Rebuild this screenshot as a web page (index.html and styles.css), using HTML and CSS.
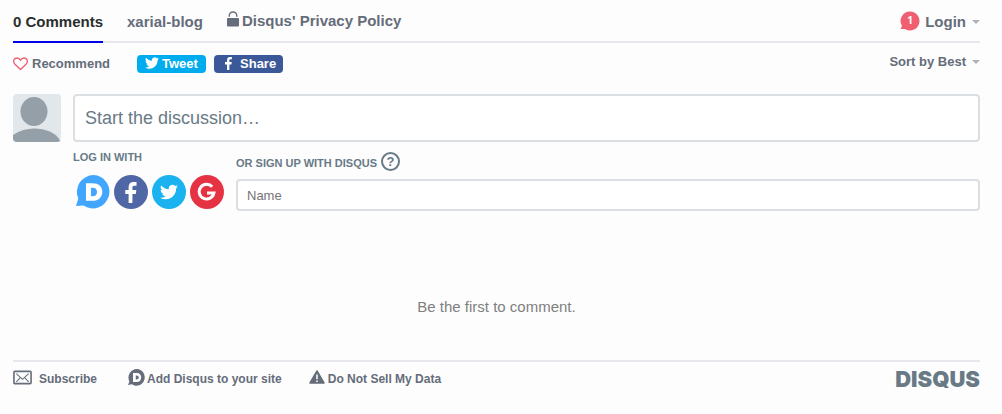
FILE: index.html
```html
<!DOCTYPE html>
<html lang="en">
<head>
<meta charset="utf-8">
<meta name="viewport" content="width=device-width, initial-scale=1">
<title>Comments</title>
<link rel="stylesheet" href="styles.css">
</head>
<body>
<svg class="sprite" aria-hidden="true">
  <symbol id="bird" viewBox="0 0 24 24"><path d="M23.9 4.6a10 10 0 0 1-2.8.8 4.900 4.900 0 0 0 2.200-2.700 9.900 9.900 0 0 1-3.100 1.200 4.920 4.920 0 0 0-8.400 4.500A14 14 0 0 1 1.700 3.200a4.920 4.920 0 0 0 1.500 6.500 4.900 4.900 0 0 1-2.200-.6v.1a4.920 4.920 0 0 0 3.900 4.800 5 5 0 0 1-2.200.1 4.930 4.930 0 0 0 4.600 3.400A9.900 9.900 0 0 1 0 19.500a14 14 0 0 0 7.500 2.200c9.100 0 14-7.500 14-14v-.6a10 10 0 0 0 2.400-2.500z"/></symbol>
  <symbol id="fb" viewBox="0 0 12 22"><path d="M3.500 22V12.500H0V8.500h3.500V5.500C3.500 2 5.500 0 8.700 0c1.500 0 2.800.1 3.100.2v3.700H9.500c-1.700 0-2 .8-2 2v2.600h4.100l-.6 4H7.500V22z"/></symbol>
</svg>
<main class="thread">
  <nav class="nav">
    <a class="nav-tab active" href="#comments">0 Comments</a>
    <a class="nav-tab" href="#community">xarial-blog</a>
    <a class="nav-tab privacy" href="#privacy">
      <svg class="lock" viewBox="0 0 12 16"><path d="M2.200 5.700V4.700a3.800 3.700 0 0 1 7.600 0v1" fill="none" stroke="currentColor" stroke-width="1.400"/><rect y="7" width="12" height="8.500" rx="1" fill="currentColor"/></svg>Disqus' Privacy Policy</a>
    <button class="nav-tab login" type="button">
      <svg class="notice" viewBox="0 0 20 20"><path d="M10 0.500a9.500 9.500 0 1 1-5 17.600L0.500 18l1.500-3A9.500 9.500 0 0 1 10 .5z" fill="#f05f70"/><text x="10" y="13" text-anchor="middle">1</text></svg>Login<span class="caret"></span>
    </button>
  </nav>
  <div class="tools">
    <button class="recommend" type="button">
      <svg class="heart" viewBox="0 0 15 14"><path d="M7.500 12.500L2 7.200C-.8 4.200 1.200 1 4 1c1.600 0 2.800.9 3.500 2.200C8.200 1.900 9.400 1 11 1c2.800 0 4.800 3.200 2 6.200z" fill="none" stroke="#f05f70" stroke-width="1.300"/></svg>Recommend</button>
    <div class="shares">
      <button class="share tweet" type="button"><svg class="share-bird"><use href="#bird"/></svg>Tweet</button>
      <button class="share facebook" type="button"><svg class="share-fb"><use href="#fb"/></svg>Share</button>
    </div>
    <button class="sort" type="button">Sort by Best<span class="caret"></span></button>
  </div>
  <form class="composer">
    <svg class="avatar" viewBox="0 0 48 48"><rect width="48" height="48" fill="#e1e7ea"/><ellipse cx="21" cy="17.500" rx="13.500" ry="14.500" fill="#949fa7"/><path d="M0 41C7 36.500 14 34.500 21 34.500c11 0 22 4 26 12V48H0z" fill="#949fa7"/></svg>
    <textarea class="message" rows="1" aria-label="Comment" placeholder="Start the discussion…"></textarea>
    <div class="auth">
      <section>
        <h2 class="label">LOG IN WITH</h2>
        <div class="providers">
          <button class="provider" type="button" aria-label="Disqus"><svg viewBox="0 0 34 34"><path d="M17.500 0a16.700 16.700 0 1 1-10 30.600L0 31l2.300-7.200A17 17 0 0 1 17.500 0z" fill="#42a6ff"/><path d="M10 8.300H16.500c6 0 9.800 3.400 9.800 8.700s-3.800 8.800-9.800 8.800H10zM15 12.800v8.500h1.800c2.600 0 4.200-1.600 4.200-4.300s-1.600-4.200-4.200-4.200z" fill="#fff"/></svg></button>
          <button class="provider" type="button" aria-label="Facebook"><svg viewBox="0 0 34 34"><circle cx="17" cy="17" r="17" fill="#5067a5"/><svg x="11" y="7" width="12" height="21" fill="#fff"><use href="#fb"/></svg></svg></button>
          <button class="provider" type="button" aria-label="Twitter"><svg viewBox="0 0 34 34"><circle cx="17" cy="17" r="17" fill="#1bb2f0"/><svg x="8" y="8" width="18" height="18" fill="#fff"><use href="#bird"/></svg></svg></button>
          <button class="provider" type="button" aria-label="Google"><svg viewBox="0 0 34 34"><circle cx="17" cy="17" r="17" fill="#e63343"/><path d="M22.200 11.800A7.400 7.400 0 1 0 23.900 18H17" fill="none" stroke="#fff" stroke-width="3"/></svg></button>
        </div>
      </section>
      <section class="signup">
        <h2 class="label signup-label"><span class="signup-text">OR SIGN UP WITH DISQUS</span> <button class="help" type="button" aria-label="Help">?</button></h2>
        <input class="name" type="text" aria-label="Name" placeholder="Name">
      </section>
    </div>
  </form>
  <p class="empty">Be the first to comment.</p>
  <footer class="footer">
    <a class="foot-link subscribe" href="#subscribe"><svg class="mail" viewBox="0 0 20 15"><rect x="1" y="1" width="18" height="13" rx="1" fill="none" stroke="currentColor" stroke-width="1.700"/><path d="M3.500 3.500l6.500 6 6.500-6M3.500 12l4-4M16.500 12l-4-4" fill="none" stroke="currentColor" stroke-width="1.100"/></svg>Subscribe</a>
    <a class="foot-link add" href="#add"><svg class="mini" viewBox="0 0 34 34"><path d="M17.500 0a16.700 16.700 0 1 1-10 30.600L0 32l2.800-7.200A17 17 0 0 1 17.500 0z" fill="currentColor"/><path d="M10 8H17.500c5.500 0 9 3.500 9 9s-3.500 9-9 9H10zM15.500 13v8h2c2.500 0 4-1.500 4-4s-1.500-4-4-4z" fill="#fff"/></svg>Add Disqus to your site</a>
    <a class="foot-link data" href="#data"><svg class="warn" viewBox="0 0 16 14"><path d="M8 1l7 12H1z" fill="currentColor" stroke="currentColor" stroke-width="1.500" stroke-linejoin="round"/><path d="M8 4.500v4.800M8 10.500V12" stroke="#fff" stroke-width="1.500"/></svg>Do Not Sell My Data</a>
    <a class="brand" href="#disqus">DISQUS</a>
  </footer>
</main>
</body>
</html>
```
FILE: styles.css
```css
* { box-sizing: border-box; }
body { margin: 0; background: #fdfdfd; color: #656c7a; font-family: "Liberation Sans", Arial, sans-serif; }
a { color: inherit; text-decoration: none; }
button { padding: 0; border: 0; background: none; color: inherit; font: inherit; cursor: pointer; }
svg { display: block; flex: none; }
h2, p { margin: 0; }
.sprite { display: none; }
.thread { padding: 0 22px 0 13px; }
.nav { display: flex; height: 43px; gap: 24px; border-bottom: 2px solid #e7e8ee; font-size: 15px; font-weight: 700; }
.nav-tab { display: flex; align-items: center; height: 43px; padding-top: 2px; border-bottom: 2px solid transparent; white-space: nowrap; }
.active { color: #2a2e2e; border-color: #0000e6; }
.privacy { gap: 3px; padding-top: 0; }
.lock { width: 12px; height: 16px; margin-bottom: 4px; }
.login { margin-left: auto; }
.notice { width: 20px; height: 20px; margin: 0 5px 2px 0; fill: #fff; font-family: "Open Sans", sans-serif; font-size: 10px; }
.caret { margin-left: 6px; border: 4px solid transparent; border-top-color: #afb1b6; border-bottom: 0; }
.tools { display: flex; align-items: flex-start; padding-top: 12px; font-size: 13px; font-weight: 700; line-height: 18px; }
.recommend { display: flex; align-items: center; gap: 4px; margin-right: 27px; }
.heart { width: 15px; height: 14px; }
.shares { display: flex; gap: 8px; }
.share { display: flex; align-items: center; width: 69px; height: 18px; border-radius: 4px; color: #fff; fill: #fff; }
.tweet { padding-left: 8px; gap: 3px; background: #00aced; }
.facebook { padding-left: 11px; gap: 8px; background: #3b5998; }
.share-bird { width: 14px; height: 14px; margin-bottom: 2px; }
.share-fb { width: 7px; height: 13px; margin-bottom: 2px; }
.sort { display: flex; align-items: center; height: 14px; margin-left: auto; }
.composer { display: grid; grid-template-columns: 48px 1fr; column-gap: 12px; padding-top: 21px; }
.avatar { width: 48px; height: 48px; border-radius: 4px; }
.message, .name { display: block; width: 100%; margin: 0; border: 2px solid #dbdfe4; border-radius: 4px; background: #fff; font-family: inherit; color: #2a2e2e; }
.message { height: 48px; padding: 10px; font-size: 18px; line-height: 24px; resize: none; overflow: hidden; }
.message::placeholder { color: #687a86; opacity: 1; }
.auth { display: flex; grid-column: 2; gap: 12px; padding-top: 8px; }
.label { color: #687a86; font-size: 11px; font-weight: 700; line-height: 14px; white-space: nowrap; }
.providers { display: flex; gap: 4px; padding: 11px 0 0 3px; }
.provider, .provider > svg { display: block; width: 34px; height: 34px; }
.signup { flex: 1; padding-top: 2px; }
.signup-label { display: flex; align-items: center; gap: 4px; height: 19px; }
.signup-text { padding-top: 2px; }
.help { width: 19px; height: 19px; border: 2px solid #687a86; border-radius: 50%; font-size: 13px; line-height: 15px; }
.name { height: 32px; margin-top: 8px; padding: 0 9px; font-size: 13px; }
.name::placeholder { color: #757575; opacity: 1; }
.empty { padding: 86px 0 43px; color: #7f8080; font-size: 15px; line-height: 20px; text-align: center; }
.footer { display: flex; align-items: center; height: 36px; border-top: 2px solid #e7e8ee; font-size: 12px; font-weight: 700; }
.foot-link { display: flex; align-items: center; white-space: nowrap; }
.subscribe { gap: 7px; margin-right: 31px; }
.add { gap: 2px; margin-right: 27px; }
.data { gap: 3px; }
.mail { width: 19px; height: 15px; margin-bottom: 3px; }
.mini { width: 17px; height: 17px; margin-bottom: 3px; }
.warn { width: 16px; height: 14px; margin-bottom: 4px; }
.brand { margin-left: auto; color: #687a86; font-family: Inter, sans-serif; font-size: 22px; font-weight: 900; }
```
